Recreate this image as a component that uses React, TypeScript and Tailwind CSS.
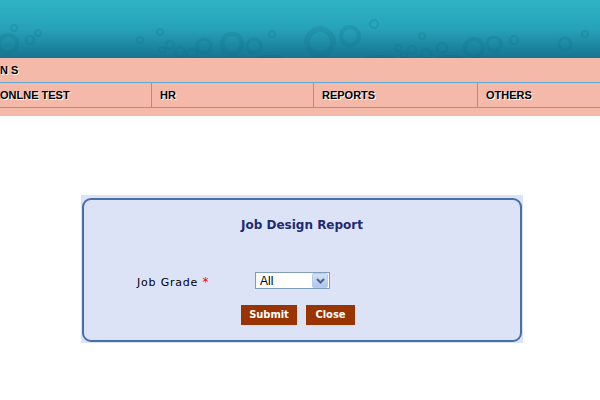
import React from "react";

const rings: [number, number, number][] = [
  [8, 44, 9], [30, 40, 4], [38, 33, 3], [14, 28, 3],
  [162, 50, 3], [170, 45, 4], [180, 52, 5], [192, 54, 5], [204, 46, 7],
  [232, 44, 10], [254, 46, 7], [272, 34, 3], [320, 42, 13], [350, 36, 9],
  [374, 24, 4], [398, 48, 3], [404, 55, 3], [412, 50, 4], [426, 54, 5],
  [442, 48, 5], [474, 48, 9], [494, 44, 7], [514, 40, 4], [422, 36, 3],
  [160, 32, 3], [140, 40, 3], [565, 44, 6], [585, 34, 3],
];

function Header() {
  return (
    <div className="relative h-[58px] overflow-hidden bg-gradient-to-b from-[#2fb4c5] via-[#27a2b8] to-[#16748f]">
      <svg className="absolute inset-0" width="600" height="58" viewBox="0 0 600 58">
        {rings.map(([x, y, r], i) => (
          <circle key={i} cx={x} cy={y} r={r} fill="none" stroke="#136d86" strokeOpacity="0.22" strokeWidth={Math.max(2, r / 2.2)} />
        ))}
        <ellipse cx="270" cy="64" rx="20" ry="9" fill="#12637b" fillOpacity="0.25" />
        <ellipse cx="380" cy="64" rx="22" ry="9" fill="#12637b" fillOpacity="0.22" />
        <ellipse cx="450" cy="64" rx="20" ry="9" fill="#12637b" fillOpacity="0.22" />
      </svg>
    </div>
  );
}

const shadow = { textShadow: "1px 1px 0 #fff" };

export default function App() {
  const menu = ["ONLNE TEST", "HR", "REPORTS", "OTHERS"];
  return (
    <div className="w-[600px] h-[400px] bg-white overflow-hidden" style={{ fontFamily: "'Liberation Sans', Arial, sans-serif" }}>
      <Header />
      <div className="bg-[#f4b9a9]">
        <div className="h-[24px] flex items-center text-[11px] font-bold text-black" style={shadow}>
          <span>N S</span>
        </div>
        <div className="h-[26px] border-y border-[#5aaad3] flex w-[600px]">
          {menu.map((m, i) => (
            <div
              key={m}
              className={`shrink-0 h-full flex items-center text-[11px] font-bold text-black ${i === 0 ? "w-[152px] border-r border-[#5aaad3]" : i === 3 ? "w-[122px] pl-[8px]" : i === 2 ? "w-[164px] pl-[8px] border-r border-[#5aaad3]" : "w-[162px] pl-[8px] border-r border-[#5aaad3]"}`}
              style={shadow}
            >
              {m}
            </div>
          ))}
        </div>
        <div className="h-[8px]" />
      </div>

      <div className="mt-[79px] ml-[81px] w-[442px] bg-[#dde3f7] pt-[3px] pb-[1px] px-[1px]">
        <div className="h-[144px] rounded-[9px] border-2 border-[#4770a8] flex flex-col">
          <div
            className="pt-[17px] h-[33px] text-center text-[12px] font-bold text-[#1e2a70] leading-[16px]"
            style={{ fontFamily: "'DejaVu Sans', Verdana, sans-serif" }}
          >
            Job Design Report
          </div>
          <div className="mt-[39px] h-[17px] flex items-center pl-[53px]">
            <div className="w-[118px] pt-[3px] text-[11px] text-black tracking-[0.8px]" style={{ fontFamily: "'DejaVu Sans', Verdana, sans-serif" }}>
              Job Grade <span className="text-[#ff0000] text-[12px]">*</span>
            </div>
            <div className="w-[75px] h-[17px] border border-[#7f9db9] bg-white flex items-center justify-between">
              <span className="pl-[4px] text-[12px] text-black leading-none">All</span>
              <div className="w-[16px] h-[15px] mr-[1px] rounded-[2px] bg-gradient-to-b from-[#d3e0f8] to-[#b0c6ef] border border-[#b9cbee] flex items-center justify-center">
                <svg width="9" height="6" viewBox="0 0 9 6">
                  <path d="M1 1 L4.5 4.5 L8 1" fill="none" stroke="#4d6185" strokeWidth="2" />
                </svg>
              </div>
            </div>
          </div>
          <div className="mt-[16px] flex pl-[157px] gap-[9px]" style={{ fontFamily: "'DejaVu Sans Condensed', 'DejaVu Sans', sans-serif" }}>
            <button className="w-[56px] h-[20px] bg-[#993300] text-white text-[11px] font-bold">Submit</button>
            <button className="w-[49px] h-[20px] bg-[#993300] text-white text-[11px] font-bold">Close</button>
          </div>
        </div>
      </div>
    </div>
  );
}
